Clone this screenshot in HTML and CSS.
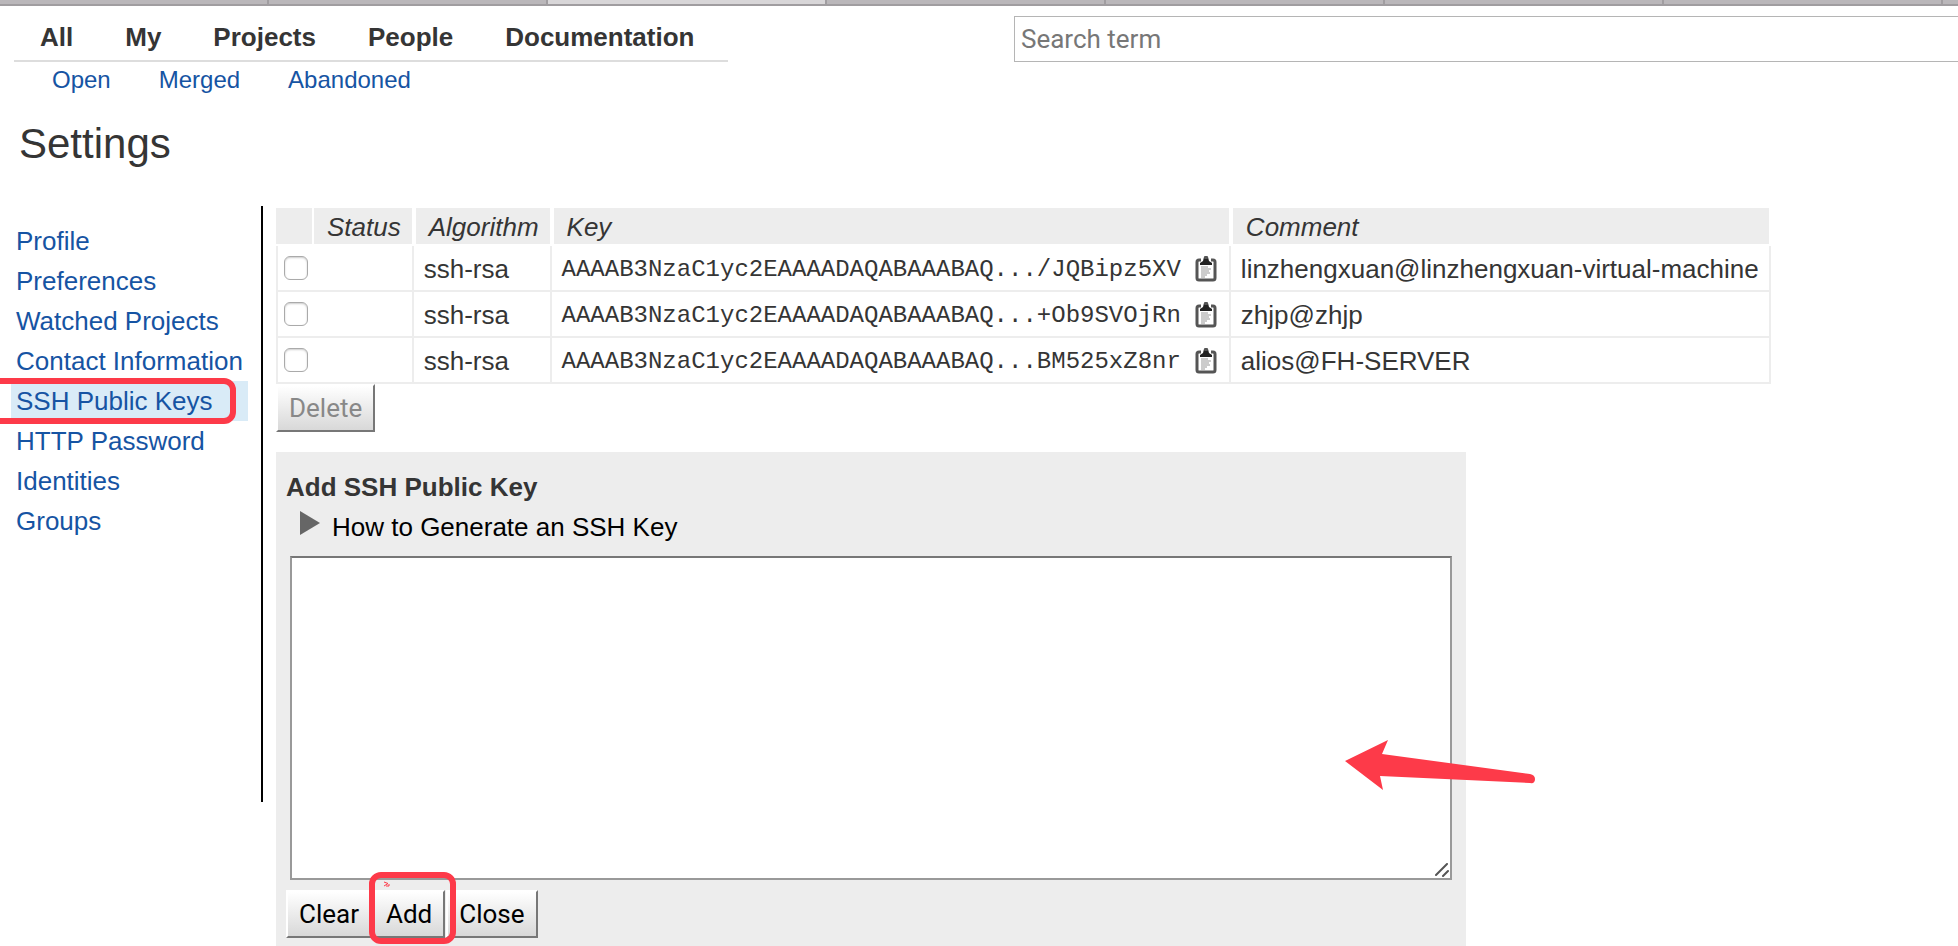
FILE: index.html
```html
<!DOCTYPE html>
<html lang="en">
<head>
<meta charset="utf-8">
<title>Settings</title>
<link rel="stylesheet" href="styles.css">
</head>
<body>
<svg class="sprite" aria-hidden="true">
  <symbol id="clipboard" viewBox="0 0 22 26">
    <rect x="2" y="4" width="18" height="20" rx="2" fill="#fff" stroke="#555" stroke-width="3"/>
    <path d="M6 4h10" stroke="#fff" stroke-width="4"/>
    <path d="M5 9V7l3-2 1-4h4l1 4 3 2v2z" fill="#222"/>
    <rect x="9" y="0" width="4" height="3" rx="1" fill="#555"/>
    <path d="M6 11h7M6 13h10M6 15h8M6 17h9M6 19h6M6 21h4" stroke="#999" stroke-width="1"/>
  </symbol>
</svg>
<div class="tabs"><span></span><span></span><span class="on"></span><span></span><span></span><span></span><span></span><span></span></div>
<header class="top">
  <div class="menus">
    <nav class="menu" aria-label="Main">
      <a href="#">All</a><a href="#">My</a><a href="#">Projects</a><a href="#">People</a><a href="#">Documentation</a>
    </nav>
    <nav class="submenu" aria-label="Changes">
      <a href="#">Open</a><a href="#">Merged</a><a href="#">Abandoned</a>
    </nav>
  </div>
  <input class="search" type="text" placeholder="Search term" aria-label="Search term">
</header>
<h1>Settings</h1>
<main class="main">
  <nav class="side" aria-label="Settings">
    <a href="#">Profile</a>
    <a href="#">Preferences</a>
    <a href="#">Watched Projects</a>
    <a href="#">Contact Information</a>
    <a href="#" class="current">SSH Public Keys<span class="mark mark-item"></span></a>
    <a href="#">HTTP Password</a>
    <a href="#">Identities</a>
    <a href="#">Groups</a>
  </nav>
  <section class="content">
    <table class="keys">
      <thead>
        <tr><th class="pick"></th><th class="status">Status</th><th class="algo">Algorithm</th><th class="key">Key</th><th>Comment</th></tr>
      </thead>
      <tbody>
        <tr>
          <td class="pick"><input type="checkbox" aria-label="Select linzhengxuan key"></td><td class="status"></td><td>ssh-rsa</td>
          <td><div class="keycell"><code>AAAAB3NzaC1yc2EAAAADAQABAAABAQ.../JQBipz5XV</code><button class="copy" aria-label="Copy key"><svg><use href="#clipboard"/></svg></button></div></td>
          <td>linzhengxuan@linzhengxuan-virtual-machine</td>
        </tr>
        <tr>
          <td class="pick"><input type="checkbox" aria-label="Select zhjp key"></td><td class="status"></td><td>ssh-rsa</td>
          <td><div class="keycell"><code>AAAAB3NzaC1yc2EAAAADAQABAAABAQ...+Ob9SVOjRn</code><button class="copy" aria-label="Copy key"><svg><use href="#clipboard"/></svg></button></div></td>
          <td>zhjp@zhjp</td>
        </tr>
        <tr>
          <td class="pick"><input type="checkbox" aria-label="Select alios key"></td><td class="status"></td><td>ssh-rsa</td>
          <td><div class="keycell"><code>AAAAB3NzaC1yc2EAAAADAQABAAABAQ...BM525xZ8nr</code><button class="copy" aria-label="Copy key"><svg><use href="#clipboard"/></svg></button></div></td>
          <td>alios@FH-SERVER</td>
        </tr>
      </tbody>
    </table>
    <button class="btn" disabled>Delete</button>
    <div class="panel">
      <h2><label for="newkey">Add SSH Public Key</label></h2>
      <button class="howto"><svg viewBox="0 0 20 24"><path d="M0 0L20 12L0 24z" fill="#666"/></svg>How to Generate an SSH Key</button>
      <div class="field">
        <textarea id="newkey"></textarea>
        <svg class="grip" viewBox="0 0 14 14"><path d="M1 12L12 1M8 13L13 8" stroke="#555" stroke-width="2" stroke-linecap="round"/></svg>
        <svg class="arrow" viewBox="0 0 192 52"><path d="M1 22L44 1L38 15L186 35Q191 36 191 40Q191 45 186 44L36 37L39 51z" fill="#fd3a49"/></svg>
      </div>
      <div class="actions">
        <button class="btn">Clear</button>
        <span class="marked"><button class="btn">Add</button><span class="mark mark-add"></span><svg class="speck" viewBox="0 0 7 6"><path d="M1 1L5 2.500L1 5M6 3V5H3" fill="none" stroke="#fd3a49"/></svg></span>
        <button class="btn">Close</button>
      </div>
    </div>
  </section>
</main>
</body>
</html>
```
FILE: styles.css
```css
* { box-sizing: border-box; }
body {
  margin: 0;
  overflow-x: hidden;
  background: #fff;
  color: #353535;
  font: 26px/40px "Liberation Sans", Arial, sans-serif;
}
a { color: #1654a3; text-decoration: none; }
.sprite { display: none; }

.tabs { display: flex; height: 6px; margin-left: -10px; overflow: hidden; border-bottom: 2px solid #a09da0; background: #bab7ba; }
.tabs span { flex: 0 0 279px; border-right: 2px solid #a09da0; }
.tabs .on { background: #d8d6d8; }

.top { display: flex; align-items: flex-start; }
.menus { flex: 0 0 714px; margin-left: 14px; }
.menu { display: flex; padding: 16px 0 8px; border-bottom: 2px solid #ddd; font-weight: bold; line-height: 30px; }
.menu a { padding: 0 26px; color: #353535; }
.submenu { display: flex; padding: 4px 14px 0; font-size: 24px; line-height: 28px; }
.submenu a { padding: 0 24px; }
.search {
  flex: 1;
  min-width: 0;
  height: 46px;
  margin: 10px -4px 0 286px;
  padding: 0 6px;
  border: 1px solid #b5b5b5;
  font: 26px/40px Roboto, sans-serif;
}
.search::placeholder { color: #777; opacity: 1; }

h1 { margin: 26px 0 38px 19px; font-size: 42px; font-weight: normal; line-height: 48px; }

.main { display: flex; align-items: flex-start; }
.side { flex: 0 0 252px; min-height: 596px; margin-left: 11px; padding: 15px 13px 0 0; border-right: 2px solid #000; }
.side a { display: block; position: relative; padding-left: 5px; white-space: nowrap; }
.side .current { background: #d9ebf7; }
.content { flex: 1; min-width: 0; padding: 2px 0 0 13px; }

.keys { border-collapse: separate; border-spacing: 0; white-space: nowrap; }
.keys th {
  height: 38px;
  padding: 2px 11px 0 13px;
  border: solid #fff;
  border-width: 0 2px 2px 2px;
  background: #ededed;
  font-weight: normal;
  font-style: italic;
  line-height: 34px;
  text-align: left;
}
.keys th.pick, .keys th.status { border-left: 0; }
.keys td { height: 46px; padding: 2px 10px 0; border: solid #ededed; border-width: 0 2px 2px 0; line-height: 42px; }
.keys .pick { width: 38px; padding: 0; }
.keys td.pick { padding-left: 6px; border-left-width: 2px; border-right: 0; }
.keys td.status { padding: 0; }
.pick input {
  display: block;
  appearance: none;
  width: 24px;
  height: 24px;
  margin: 0;
  border: 1px solid #aaa;
  border-radius: 6px;
  background: #fff;
  box-shadow: inset 0 1px 2px #ccc;
}
.keycell { display: flex; align-items: center; gap: 14px; padding-right: 2px; }
code { padding-top: 2px; font: 24px/40px "Liberation Mono", monospace; }
.copy { display: block; width: 22px; height: 26px; padding: 0; border: 0; background: none; }
.copy svg { display: block; width: 22px; height: 26px; }

.btn {
  display: block;
  height: 48px;
  padding: 0 11px;
  border: 2px solid;
  border-color: #fff #777 #777 #fff;
  background: linear-gradient(#fff, #d8d8d8);
  color: #000;
  font: 26px/44px Roboto, sans-serif;
}
.btn:disabled { color: #888; }

.panel { max-width: 1190px; margin-top: 20px; padding: 15px 14px 8px; background: #ededed; }
.panel h2 { margin: 0 0 0 -4px; font-size: 26px; }
.howto { display: flex; gap: 12px; align-items: center; margin-left: 10px; padding: 0; border: 0; background: none; color: #000; font: inherit; }
.howto svg { width: 20px; height: 24px; margin-bottom: 8px; }
.field { position: relative; margin-top: 9px; }
textarea { display: block; width: 100%; height: 324px; border: 2px solid #999; border-top-color: #777; resize: none; font: inherit; }
.grip { position: absolute; right: 3px; bottom: 3px; width: 14px; height: 14px; }
.arrow { position: absolute; right: -84px; top: 183px; width: 192px; height: 52px; }
.actions { display: flex; gap: 1px; margin: 10px 0 0 -4px; }
.marked { position: relative; }

.mark { position: absolute; border: 6px solid #fd3a49; border-radius: 12px; pointer-events: none; }
.mark-item { left: -30px; right: 12px; top: -3px; bottom: -3px; }
.mark-add { left: -4px; right: -11px; top: -18px; bottom: -6px; }
.speck { position: absolute; left: 10px; top: -9px; width: 7px; height: 6px; }
```
